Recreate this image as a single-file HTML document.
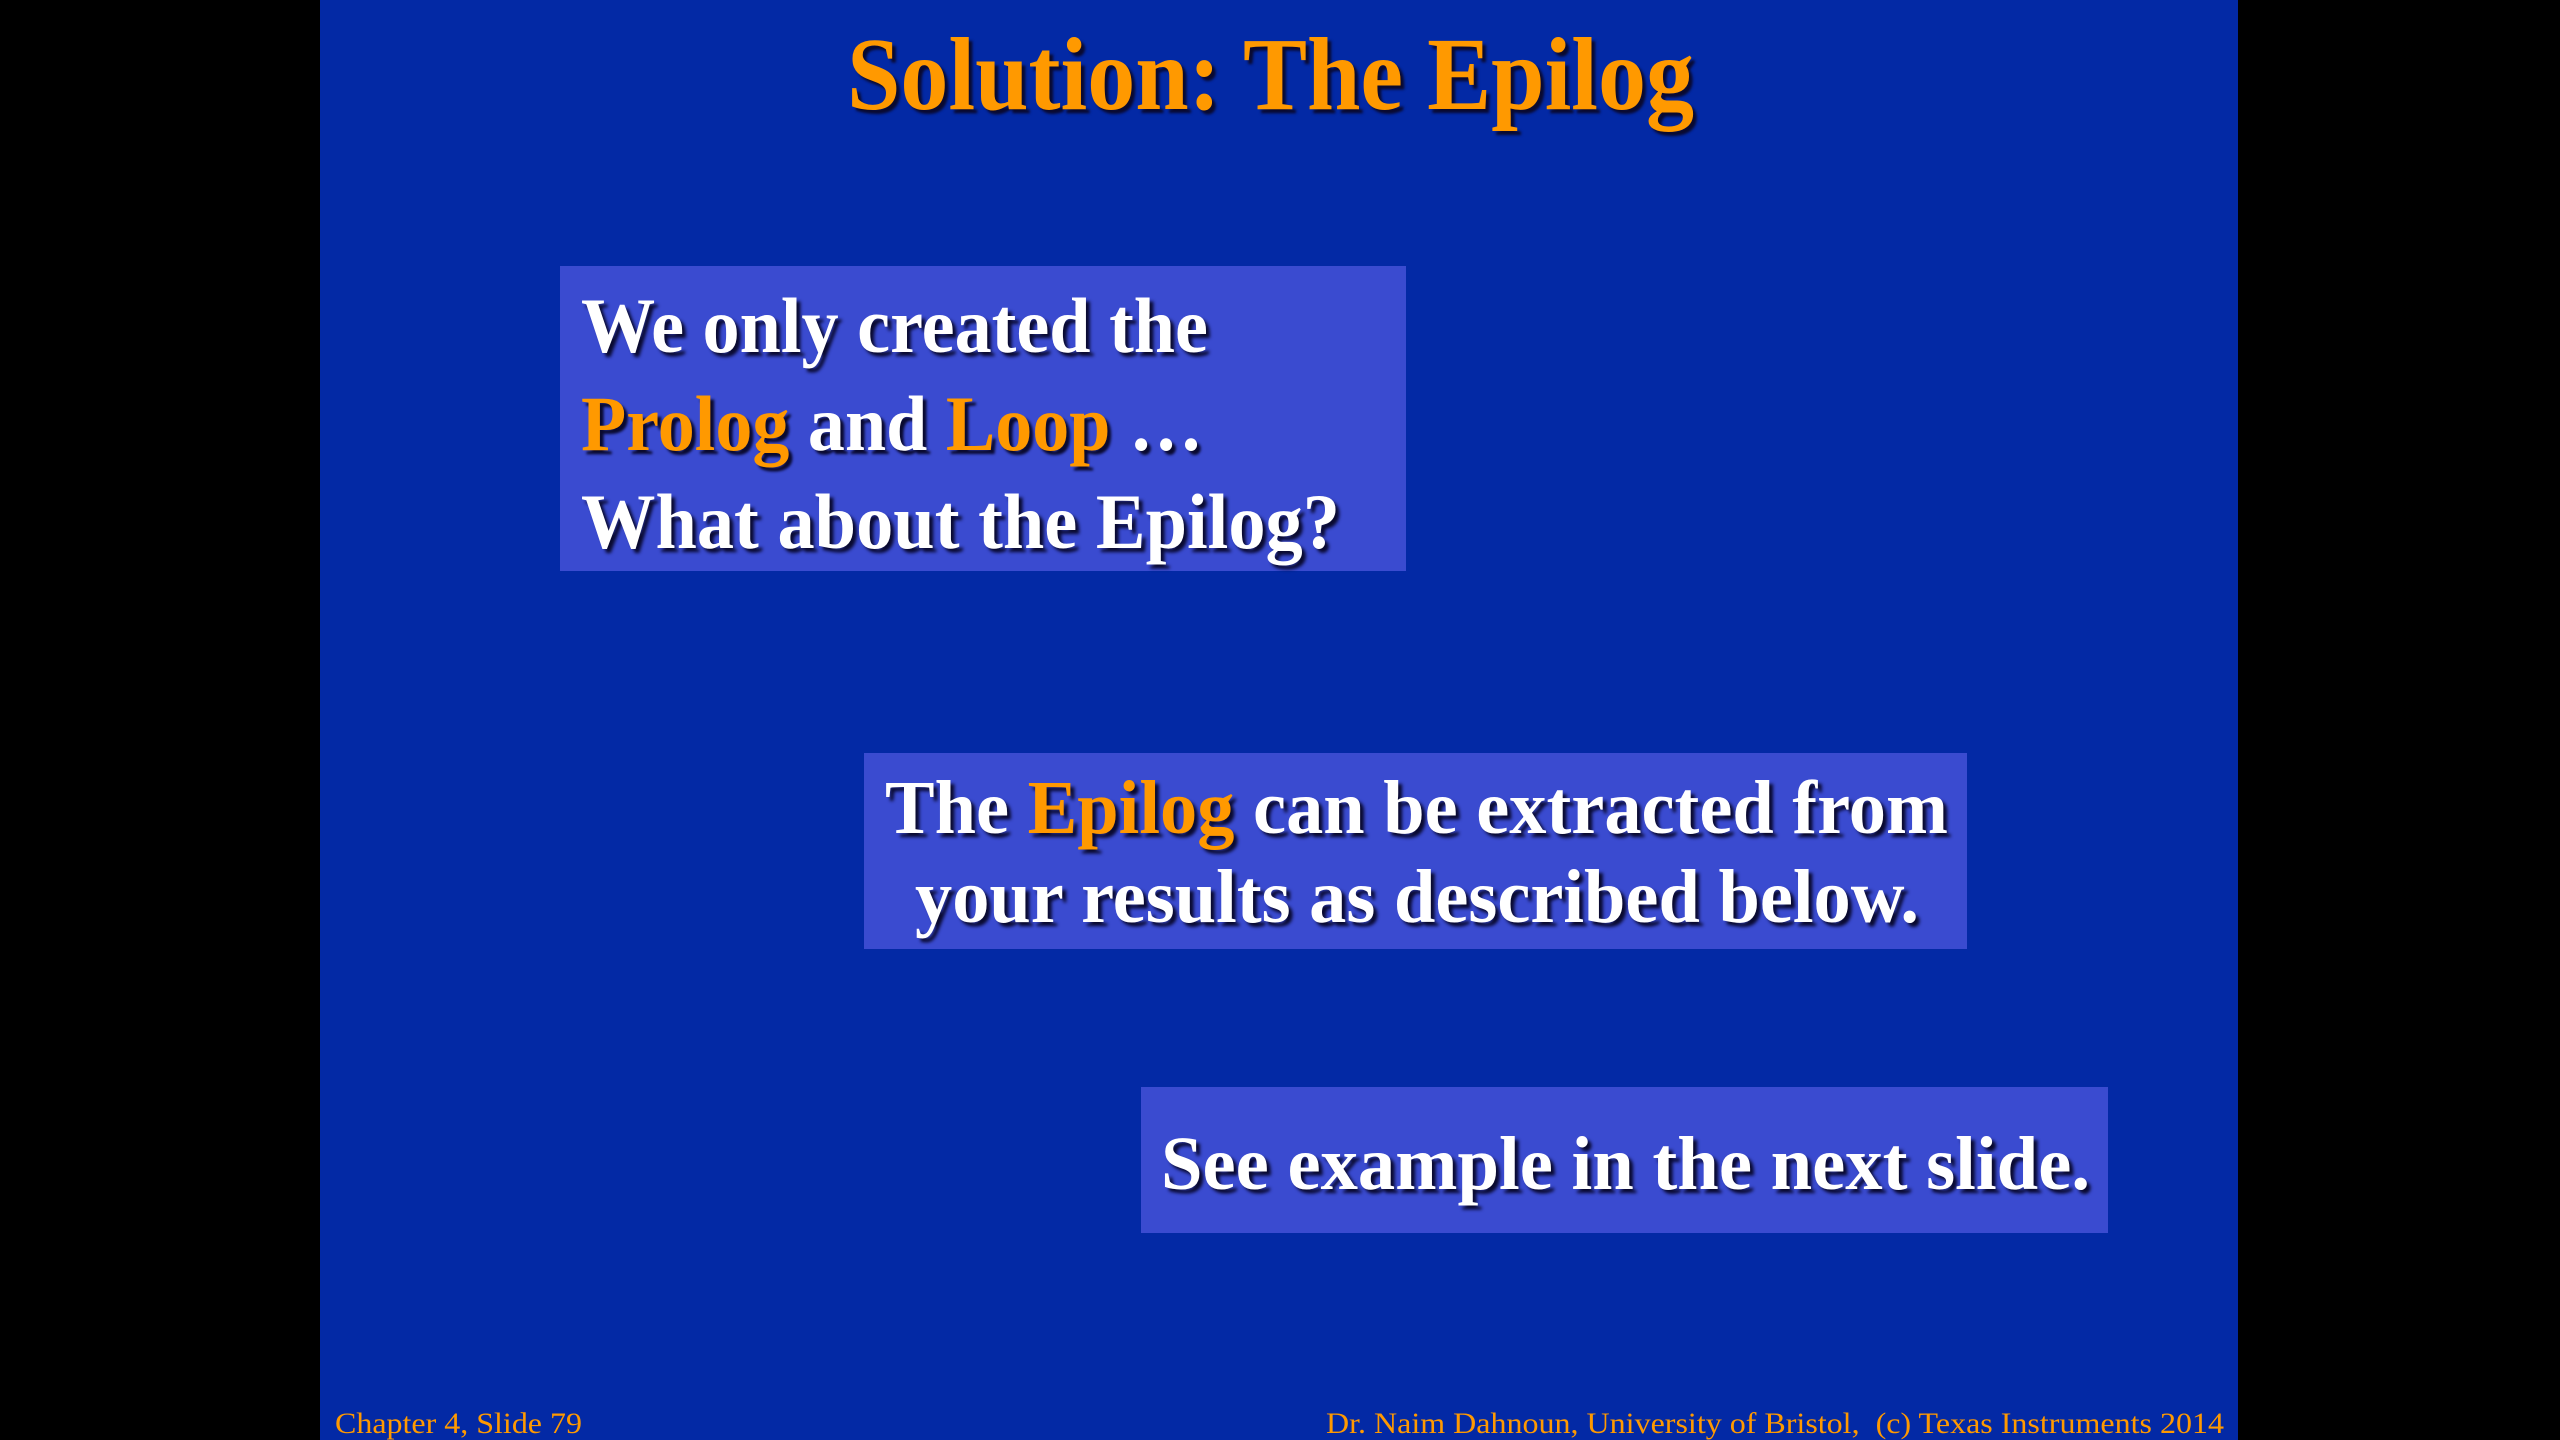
<!DOCTYPE html>
<html><head><meta charset="utf-8">
<style>
html,body{margin:0;padding:0;background:#000;width:2560px;height:1440px;overflow:hidden}
#slide{position:absolute;left:320px;top:0;width:1918px;height:1440px;background:#0329a5;font-family:"Liberation Serif","Times New Roman",serif}
.box{position:absolute;background:#3a4bd0}
.t{position:absolute;white-space:nowrap;font-weight:bold;color:#fff;text-shadow:4px 4px 3px #0a0a30;transform-origin:0 0;line-height:1}
.o{color:#ff9900}
.f{position:absolute;white-space:nowrap;color:#ff9900;font-size:30px;transform-origin:0 0;line-height:1}
</style></head><body>
<div id="slide">
<div class="t o" id="title" style="font-size:104px">Solution: The Epilog</div>
<div class="box" style="left:240px;top:266px;width:846px;height:305px"></div>
<div class="t" id="l1" style="font-size:78px">We only created the</div>
<div class="t" id="l2" style="font-size:78px"><span class="o">Prolog</span> and <span class="o">Loop</span> …</div>
<div class="t" id="l3" style="font-size:78px">What about the Epilog?</div>
<div class="box" style="left:544px;top:753px;width:1103px;height:196px"></div>
<div class="t" id="m1" style="font-size:76px">The <span class="o">Epilog</span> can be extracted from</div>
<div class="t" id="m2" style="font-size:76px">your results as described below.</div>
<div class="box" style="left:821px;top:1087px;width:967px;height:146px"></div>
<div class="t" id="n1" style="font-size:76px">See example in the next slide.</div>
<div class="f" id="f1">Chapter 4, Slide 79</div>
<div class="f" id="f2">Dr. Naim Dahnoun, University of Bristol,&nbsp; (c) Texas Instruments 2014</div>
</div>
<script>
var S=[["title",527,1374,116],["l1",261,888,356],["l2",261,883,454],["l3",261,1020,552],
["m1",565,1628,838],["m2",595,1599,927],["n1",841,1770,1194],["f1",15,262,1436],["f2",1006,1904,1436]];
S.forEach(function(s){var e=document.getElementById(s[0]);var w=e.getBoundingClientRect().width;
var fs=parseFloat(getComputedStyle(e).fontSize);var k=(s[2]-s[1])/w;
e.style.left=s[1]+"px";e.style.top=(s[3]-fs*0.891)+"px";e.style.transform="scaleX("+k+")";});
</script>
</body></html>
